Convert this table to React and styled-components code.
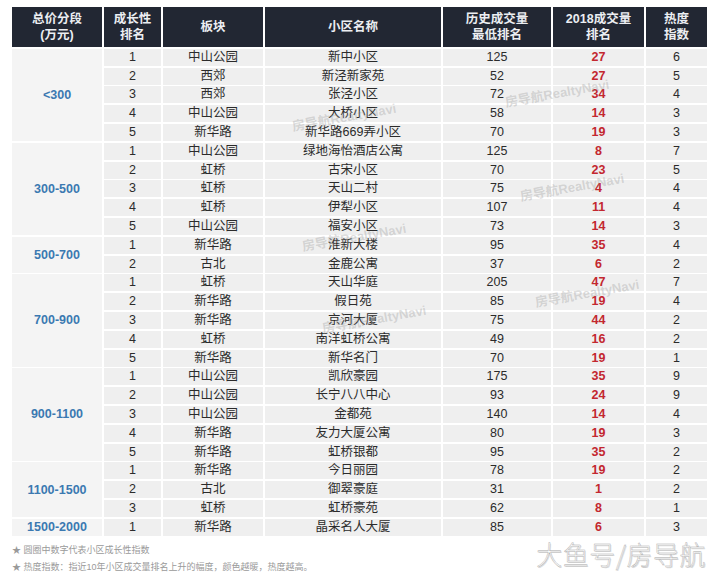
import React from 'react'
import styled, { createGlobalStyle } from 'styled-components'

const groups = [
  { range: '<300', rows: [
    ['1', '中山公园', '新中小区', '125', '27', '6'],
    ['2', '西郊', '新泾新家苑', '52', '27', '5'],
    ['3', '西郊', '张泾小区', '72', '34', '4'],
    ['4', '中山公园', '大桥小区', '58', '14', '3'],
    ['5', '新华路', '新华路669弄小区', '70', '19', '3'],
  ] },
  { range: '300-500', rows: [
    ['1', '中山公园', '绿地海怡酒店公寓', '125', '8', '7'],
    ['2', '虹桥', '古宋小区', '70', '23', '5'],
    ['3', '虹桥', '天山二村', '75', '4', '4'],
    ['4', '虹桥', '伊犁小区', '107', '11', '4'],
    ['5', '中山公园', '福安小区', '73', '14', '3'],
  ] },
  { range: '500-700', rows: [
    ['1', '新华路', '淮新大楼', '95', '35', '4'],
    ['2', '古北', '金鹿公寓', '37', '6', '2'],
  ] },
  { range: '700-900', rows: [
    ['1', '虹桥', '天山华庭', '205', '47', '7'],
    ['2', '新华路', '假日苑', '85', '19', '4'],
    ['3', '新华路', '京河大厦', '75', '44', '2'],
    ['4', '虹桥', '南洋虹桥公寓', '49', '16', '2'],
    ['5', '新华路', '新华名门', '70', '19', '1'],
  ] },
  { range: '900-1100', rows: [
    ['1', '中山公园', '凯欣豪园', '175', '35', '9'],
    ['2', '中山公园', '长宁八八中心', '93', '24', '9'],
    ['3', '中山公园', '金都苑', '140', '14', '4'],
    ['4', '新华路', '友力大厦公寓', '80', '19', '3'],
    ['5', '新华路', '虹桥银都', '95', '35', '2'],
  ] },
  { range: '1100-1500', rows: [
    ['1', '新华路', '今日丽园', '78', '19', '2'],
    ['2', '古北', '御翠豪庭', '31', '1', '2'],
    ['3', '虹桥', '虹桥豪苑', '62', '8', '1'],
  ] },
  { range: '1500-2000', rows: [
    ['1', '新华路', '晶采名人大厦', '85', '6', '3'],
  ] },
]

const headers = [
  ['总价分段', '(万元)'],
  ['成长性', '排名'],
  ['板块'],
  ['小区名称'],
  ['历史成交量', '最低排名'],
  ['2018成交量', '排名'],
  ['热度', '指数'],
]

// watermark spots: left, top (centre line)
const marks = [
  [292, 116], [505, 92], [520, 186], [302, 236], [535, 292], [322, 318],
]

const Global = createGlobalStyle`
  body {
    margin: 0;
    background: #fff;
    font-family: "Liberation Sans", "Noto Sans CJK SC", sans-serif;
  }
`

const Page = styled.div`
  position: relative;
  width: 720px;
  height: 584px;
  overflow: hidden;
  padding: 7px 0 0 12px;
  box-sizing: border-box;
`

const Table = styled.div`
  display: grid;
  grid-template-columns: 90px 57px 100px 176px 108px 91px 61px;
  grid-template-rows: 40px;
  grid-auto-rows: 17px;
  column-gap: 2px;
  row-gap: 1.8px;
  width: 695px;
`

const Head = styled.div`
  background: #222733;
  color: #eceef2;
  font-weight: bold;
  font-size: 12.5px;
  line-height: 16px;
  display: flex;
  flex-direction: column;
  align-items: center;
  justify-content: center;
`

const Range = styled.div`
  grid-row: span ${p => p.$span};
  background: #f4f4f4;
  color: #3b79b1;
  font-weight: bold;
  font-size: 12.5px;
  display: flex;
  align-items: center;
  justify-content: center;
`

const Cell = styled.div`
  background: #efefef;
  color: ${p => (p.$hot ? '#c3272f' : '#2b2b2b')};
  font-weight: ${p => (p.$hot ? 'bold' : 'normal')};
  font-size: 12.5px;
  line-height: 17px;
  text-align: center;
  white-space: nowrap;
`

const Notes = styled.div`
  margin-top: 8px;
  display: flex;
  flex-direction: column;
  gap: 5px;
  font-size: 9px;
  line-height: 12px;
  color: #9a9a9a;
`

const Mark = styled.div`
  position: absolute;
  font-size: 13px;
  font-weight: bold;
  color: rgba(150, 150, 150, 0.32);
  transform: rotate(-10deg);
  transform-origin: left center;
  white-space: nowrap;
  pointer-events: none;
`

const Brand = styled.div`
  position: absolute;
  right: 14px;
  bottom: 17px;
  font-size: 26px;
  line-height: 26px;
  font-weight: 300;
  letter-spacing: 0.5px;
  color: #fff;
  -webkit-text-stroke: 0.4px #a8a8a8;
  text-shadow: 1px 1px 0 rgba(160, 160, 160, 0.35);
  font-family: "Noto Sans CJK SC", sans-serif;
`

export default function App() {
  return (
    <Page>
      <Global />
      <Table>
        {headers.map((h, i) => (
          <Head key={i}>
            {h.map(line => <span key={line}>{line}</span>)}
          </Head>
        ))}
        {groups.map(g => (
          <React.Fragment key={g.range}>
            <Range $span={g.rows.length}>{g.range}</Range>
            {g.rows.map((r, ri) =>
              r.map((v, ci) => (
                <Cell key={ri + '-' + ci} $hot={ci === 4}>{v}</Cell>
              ))
            )}
          </React.Fragment>
        ))}
      </Table>
      <Notes>
        <span>★ 圆圈中数字代表小区成长性指数</span>
        <span>★ 热度指数：指近10年小区成交量排名上升的幅度，颜色越暖，热度越高。</span>
      </Notes>
      {marks.map(([x, y], i) => (
        <Mark key={i} style={{ left: x, top: y }}>房导航RealtyNavi</Mark>
      ))}
      <Brand>大鱼号/房导航</Brand>
    </Page>
  )
}
